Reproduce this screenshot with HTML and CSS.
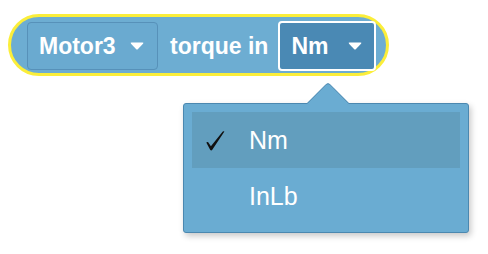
FILE: index.html
```html
<!DOCTYPE html>
<html>
<head>
<meta charset="utf-8">
<link rel="stylesheet" href="styles.css">
</head>
<body>
<div class="block">
  <div class="field field-motor">
    <span class="label">Motor3</span>
    <svg class="caret" width="14" height="8" viewBox="0 0 14 8"><path d="M1.5 0.5 H12.5 Q14 0.5 13 1.7 L8 7 Q7 8 6 7 L1 1.7 Q0 0.5 1.5 0.5 Z" fill="#fff"/></svg>
  </div>
  <span class="text">torque in</span>
  <div class="field field-unit">
    <span class="label">Nm</span>
    <svg class="caret" width="14" height="8" viewBox="0 0 14 8"><path d="M1.5 0.5 H12.5 Q14 0.5 13 1.7 L8 7 Q7 8 6 7 L1 1.7 Q0 0.5 1.5 0.5 Z" fill="#fff"/></svg>
  </div>
</div>
<div class="menu">
  <div class="menu-arrow"></div>
  <div class="menu-item selected">
    <span class="check"><svg width="19" height="20" viewBox="0 0 19 20"><path d="M0.3 11.6 Q1.2 10.6 2 11 L4.9 15.2 L16.8 0.6 Q17.6 -0.1 18.4 0.6 L6.3 18.8 Q5.3 19.9 4.3 19 L2.8 16.2 Z" fill="#111"/></svg></span>
    <span class="item-text">Nm</span>
  </div>
  <div class="menu-item"><span class="check"></span><span class="item-text">InLb</span></div>
</div>
</body>
</html>
```
FILE: styles.css
```css
html, body {
  margin: 0;
  padding: 0;
  background: #ffffff;
  font-family: "Liberation Sans", Arial, sans-serif;
}
body {
  width: 488px;
  height: 254px;
  overflow: hidden;
  position: relative;
}
.block {
  box-sizing: border-box;
  margin: 14px 0 0 8px;
  width: 381px;
  height: 62px;
  border: 3px solid #fbee3a;
  border-radius: 31px;
  background: #6dadd2;
  display: flex;
  align-items: center;
  padding-left: 16px;
}
.field {
  box-sizing: border-box;
  display: flex;
  align-items: center;
  border-radius: 4px;
  color: #fff;
  font-weight: bold;
  font-size: 23px;
}
.field-motor {
  width: 131px;
  height: 48px;
  border: 1px solid #5791b9;
  background: #6aaad0;
  padding-left: 11px;
  margin-top: 2px;
}
.field-motor .caret {
  margin-left: 14px;
}
.text {
  color: #fff;
  font-weight: bold;
  font-size: 23px;
  margin-left: 12px;
  margin-top: 2px;
}
.field-unit {
  width: 98px;
  height: 50px;
  border: 2px solid #ffffff;
  background: #4a89b4;
  margin-left: 10px;
  padding-left: 11px;
  margin-top: 2px;
}
.field-unit .caret {
  margin-left: 20px;
}
.caret {
  display: block;
}
.menu {
  position: absolute;
  left: 183px;
  top: 103px;
  box-sizing: border-box;
  width: 286px;
  height: 130px;
  background: #6aacd2;
  border: 1px solid #4b88b0;
  border-radius: 3px;
  box-shadow: 2px 3px 6px rgba(0, 0, 0, 0.22);
  padding: 8px 8px;
}
.menu-arrow {
  position: absolute;
  left: 129px;
  top: -16px;
  width: 29px;
  height: 29px;
  background: #6aacd2;
  border-top: 1px solid #4b88b0;
  border-left: 1px solid #4b88b0;
  border-top-left-radius: 4px;
  transform: rotate(45deg);
}
.menu-item {
  position: relative;
  height: 56px;
  display: flex;
  align-items: center;
  color: #fff;
  font-size: 25px;
}
.menu-item.selected {
  background: #629ebe;
}
.check {
  width: 57px;
  box-sizing: border-box;
  padding-left: 14px;
  padding-top: 2px;
  display: flex;
  align-items: center;
}
.check svg {
  display: block;
}
.item-text {
  line-height: 1;
}
```
